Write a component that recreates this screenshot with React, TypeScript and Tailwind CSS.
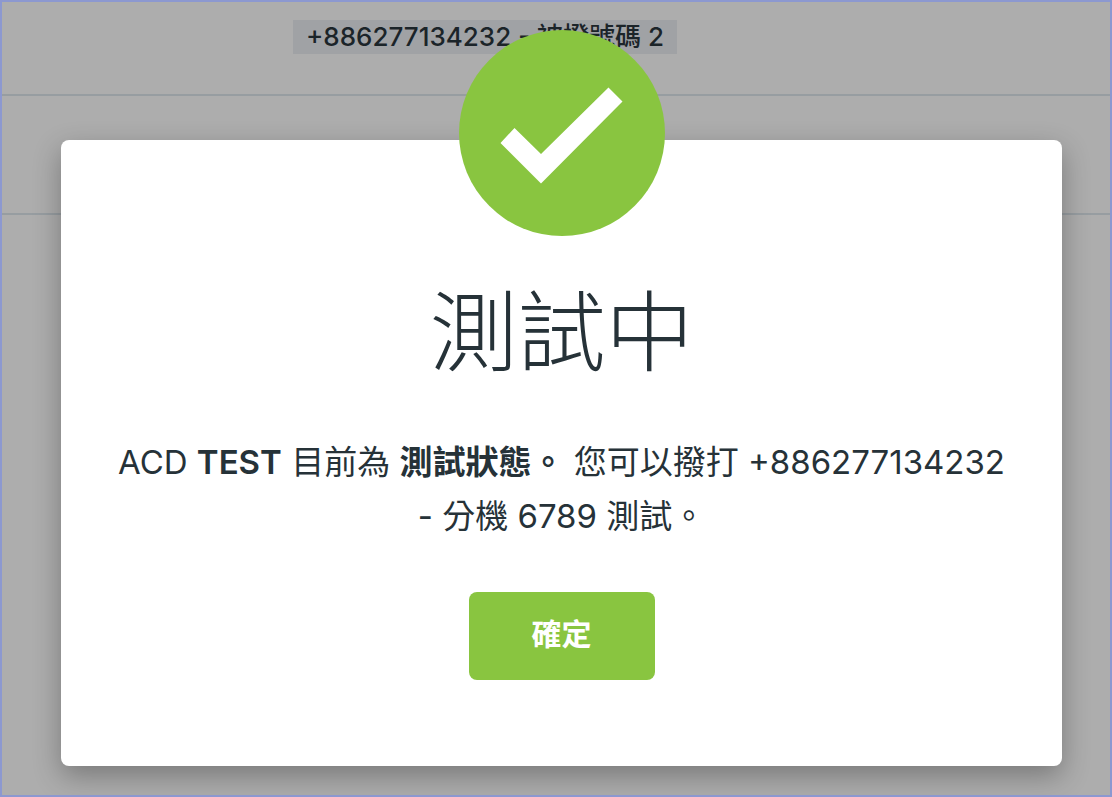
import React from 'react';

interface PhoneNumberTagProps {
  number: string;
  label: string;
}

const PhoneNumberTag: React.FC<PhoneNumberTagProps> = ({ number, label }) => {
  return (
    <span className="bg-[#a0a2a5] px-[13px] text-[26px] leading-[34px] font-medium text-[#1b2429]">
      {number} - {label}
    </span>
  );
};

const SuccessIcon: React.FC = () => {
  return (
    <svg viewBox="0 0 206 206" className="h-[206px] w-[206px]" aria-hidden="true">
      <circle cx="103" cy="103" r="103" fill="#89c540" />
      <path d="M55.500 98 L82 124 L149.500 57.500 L163.500 71.500 L82 153.500 L41.500 113 Z" fill="#fff" />
    </svg>
  );
};

const TestModeDialog: React.FC = () => {
  return (
    <div
      role="dialog"
      aria-labelledby="dialog-title"
      className="relative mt-[138px] flex w-full flex-col items-center rounded-lg bg-white px-12 pt-[132px] pb-[86px] shadow-[0_10px_28px_rgba(0,0,0,0.3)]"
    >
      <div className="absolute inset-x-0 -top-[110px] flex justify-center">
        <SuccessIcon />
      </div>
      <h1 id="dialog-title" className="text-[88px] leading-[120px] font-light">
        測試中
      </h1>
      <p className="mt-[43px] text-center text-[33px] leading-[54px]">
        ACD <strong className="font-semibold">TEST</strong> 目前為{' '}
        <strong className="font-semibold">測試狀態。</strong> 您可以撥打 +886277134232 - 分機 6789 測試。
      </p>
      <button
        type="button"
        className="mt-[49px] rounded-lg bg-[#89c540] px-[63px] pt-[18px] pb-[22px] text-[30px] leading-[48px] font-bold text-white"
      >
        確定
      </button>
    </div>
  );
};

const App: React.FC = () => {
  return (
    <div
      lang="zh-Hant"
      className="relative min-h-screen border-2 border-[#8c98d0] bg-[#adadad] font-['Inter','Noto_Sans_CJK_TC',sans-serif] text-[#263238]"
    >
      <ul>
        <li className="flex h-[94px] items-start border-b-2 border-[#979da1] pt-[18px] pl-[291px]">
          <PhoneNumberTag number="+886277134232" label="被撥號碼 2" />
        </li>
        <li className="h-[119px] border-b-2 border-[#979da1]" />
      </ul>
      <div className="absolute inset-0 overflow-hidden pr-12 pl-[59px]">
        <TestModeDialog />
      </div>
    </div>
  );
};

export default App;
